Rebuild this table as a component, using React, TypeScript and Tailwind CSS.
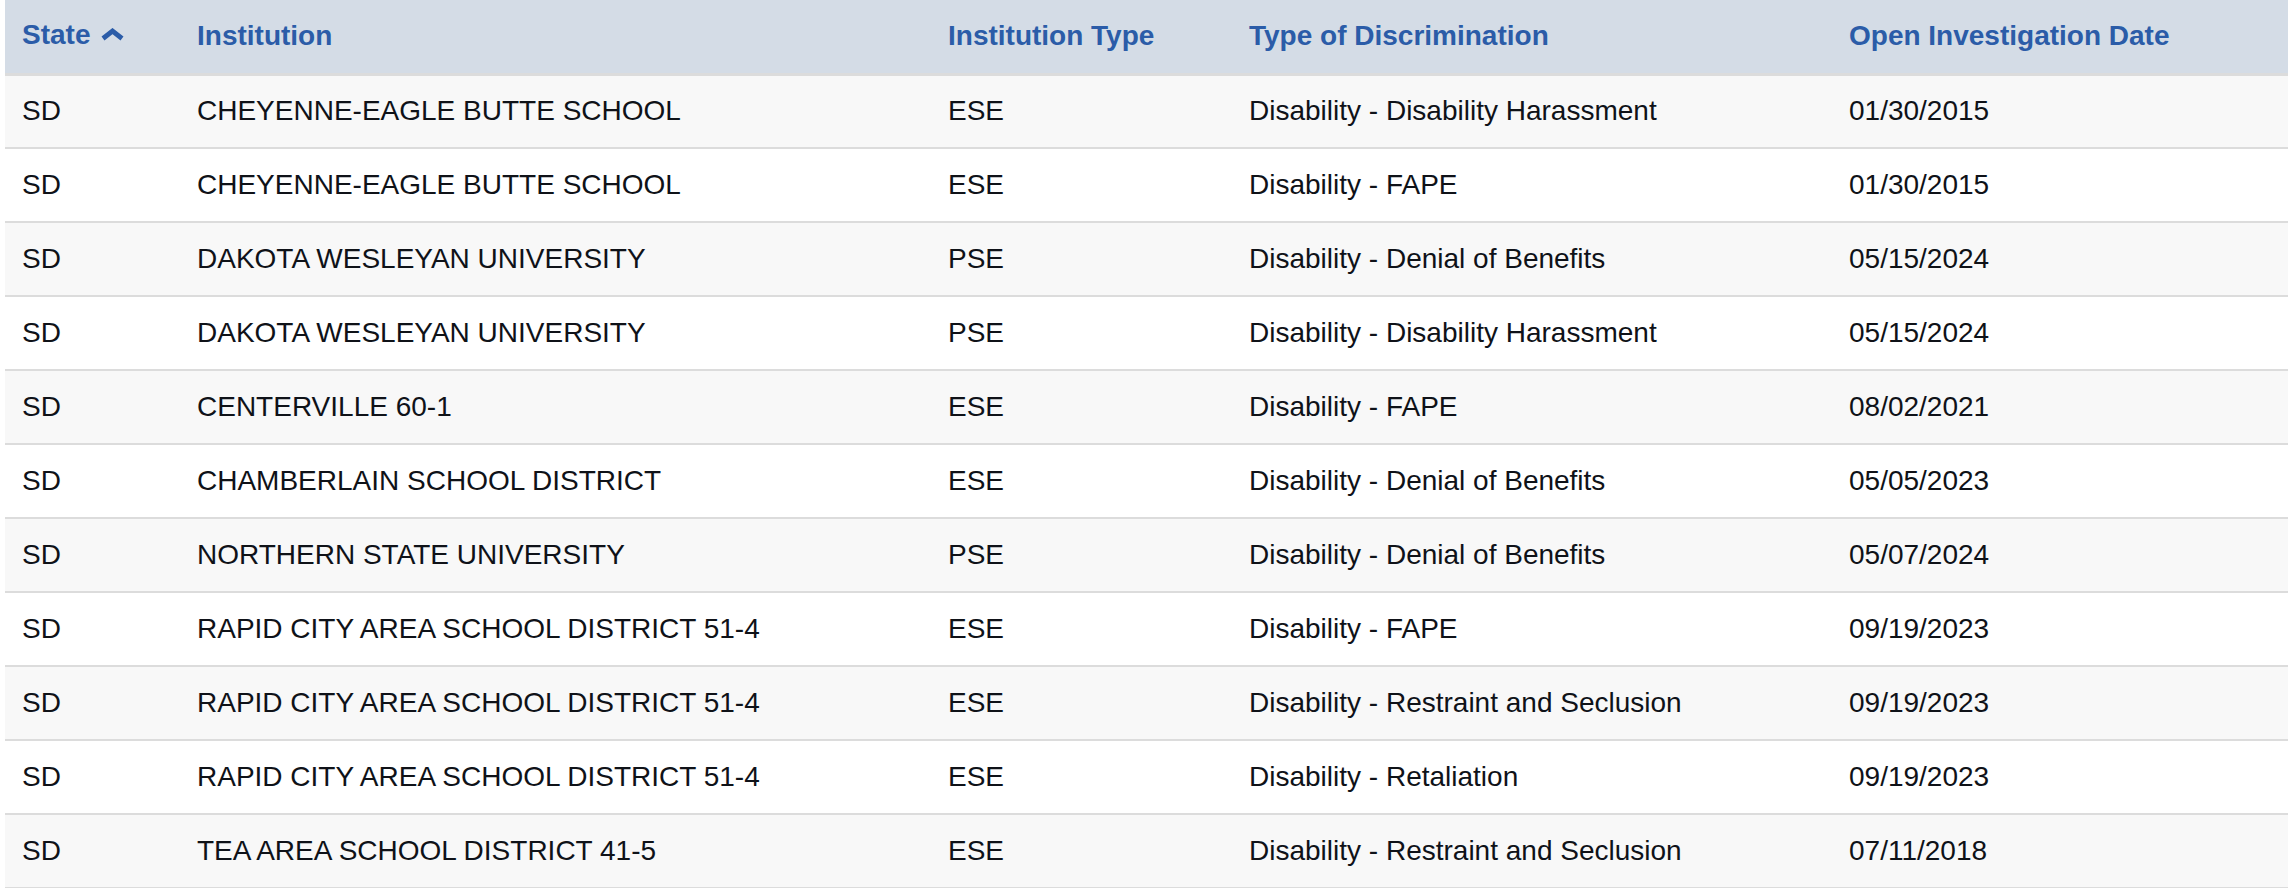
const rows = [
  ['SD', 'CHEYENNE-EAGLE BUTTE SCHOOL', 'ESE', 'Disability - Disability Harassment', '01/30/2015'],
  ['SD', 'CHEYENNE-EAGLE BUTTE SCHOOL', 'ESE', 'Disability - FAPE', '01/30/2015'],
  ['SD', 'DAKOTA WESLEYAN UNIVERSITY', 'PSE', 'Disability - Denial of Benefits', '05/15/2024'],
  ['SD', 'DAKOTA WESLEYAN UNIVERSITY', 'PSE', 'Disability - Disability Harassment', '05/15/2024'],
  ['SD', 'CENTERVILLE 60-1', 'ESE', 'Disability - FAPE', '08/02/2021'],
  ['SD', 'CHAMBERLAIN SCHOOL DISTRICT', 'ESE', 'Disability - Denial of Benefits', '05/05/2023'],
  ['SD', 'NORTHERN STATE UNIVERSITY', 'PSE', 'Disability - Denial of Benefits', '05/07/2024'],
  ['SD', 'RAPID CITY AREA SCHOOL DISTRICT 51-4', 'ESE', 'Disability - FAPE', '09/19/2023'],
  ['SD', 'RAPID CITY AREA SCHOOL DISTRICT 51-4', 'ESE', 'Disability - Restraint and Seclusion', '09/19/2023'],
  ['SD', 'RAPID CITY AREA SCHOOL DISTRICT 51-4', 'ESE', 'Disability - Retaliation', '09/19/2023'],
  ['SD', 'TEA AREA SCHOOL DISTRICT 41-5', 'ESE', 'Disability - Restraint and Seclusion', '07/11/2018'],
]

function SortUp() {
  return (
    <svg width="25" height="13" viewBox="0 0 25 13" className="ml-[10px] inline-block">
      <polyline points="3,10.5 12.5,3 22,10.5" fill="none" stroke="currentColor" strokeWidth="4.8" strokeLinejoin="miter" />
    </svg>
  )
}

export default function App() {
  return (
    <div className="min-h-screen bg-white pl-[5px] font-['Liberation_Sans',Arial,sans-serif]">
      <table className="w-full table-fixed border-collapse text-[28px] leading-none">
        <colgroup>
          <col className="w-[175px]" />
          <col className="w-[751px]" />
          <col className="w-[301px]" />
          <col className="w-[600px]" />
          <col />
        </colgroup>
        <thead>
          <tr className="h-[74px] border-b-[3px] border-[#dcdcdc] bg-[#d4dce6] text-left font-bold text-[#2b5ca8]">
            <th className="pl-[17px] pb-[3px] font-bold">
              <span className="inline-flex items-center">
                State
                <SortUp />
              </span>
            </th>
            <th className="pl-[17px] font-bold">Institution</th>
            <th className="pl-[17px] font-bold">Institution Type</th>
            <th className="pl-[17px] font-bold">Type of Discrimination</th>
            <th className="pl-[17px] font-bold">Open Investigation Date</th>
          </tr>
        </thead>
        <tbody className="text-[#0f1218]">
          {rows.map((r, i) => (
            <tr key={i} className="h-[74px] border-b-2 border-[#dcdcdc] odd:bg-[#f8f8f8] even:bg-white">
              {r.map((c, j) => (
                <td key={j} className="whitespace-nowrap pl-[17px]">
                  {c}
                </td>
              ))}
            </tr>
          ))}
        </tbody>
      </table>
    </div>
  )
}
